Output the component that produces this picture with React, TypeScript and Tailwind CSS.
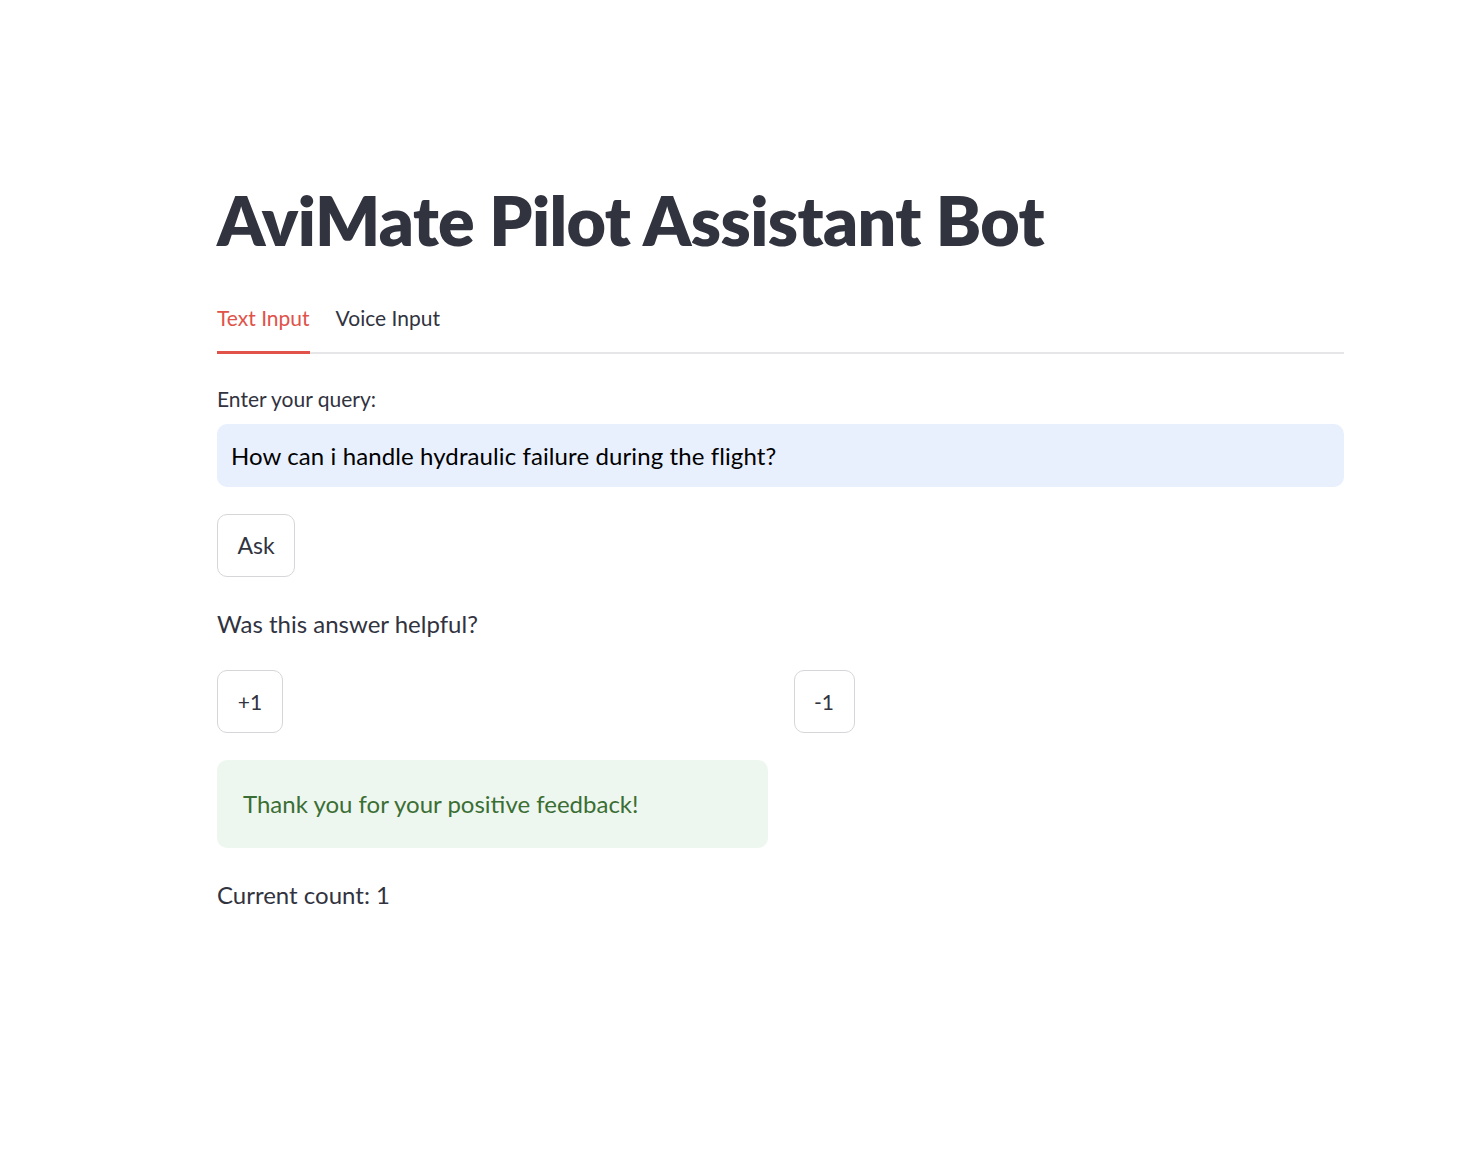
export default function App() {
  return (
    <div className="min-h-[1172px] bg-white text-[#31333f]" style={{ fontFamily: 'Lato, "Noto Sans", sans-serif' }}>
      <div className="ml-[217px] w-[1127px] pt-[176px]">
        <h1 className="text-[68px] font-extrabold leading-[88px] tracking-[-0.6px] text-[#31333f]">AviMate Pilot Assistant Bot</h1>

        <div className="mt-[35px] flex border-b-2 border-[#e6e6e9]">
          <button className="-mb-[2px] border-b-[3px] border-[#e0524a] pb-[17px] pt-[3px] text-[21px] leading-[32px] text-[#e0524a]">Text Input</button>
          <button className="ml-[26px] pb-[18px] pt-[3px] text-[21px] leading-[32px] text-[#31333f]">Voice Input</button>
        </div>

        <div className="mt-[31px] text-[21px] leading-[28px]">Enter your query:</div>
        <div className="mt-[11px] flex h-[63px] items-center rounded-[10px] bg-[#e8f0fe] px-[14px] text-[24px] tracking-[0.1px] text-black">
          How can i handle hydraulic failure during the flight?
        </div>

        <button className="mt-[27px] flex h-[63px] w-[78px] items-center justify-center rounded-[10px] border border-[#d6d6d9] bg-white text-[23px]">Ask</button>

        <p className="mt-[31px] text-[24px] leading-[32px]">Was this answer helpful?</p>

        <div className="mt-[30px] grid grid-cols-2 gap-[26px]">
          <div>
            <button className="flex h-[63px] w-[66px] items-center justify-center rounded-[10px] border border-[#d6d6d9] bg-white text-[21px]">+1</button>
            <div className="mt-[27px] flex h-[88px] items-center rounded-[10px] bg-[#eef7ef] px-[26px] text-[24px] text-[#3b6e34]">
              Thank you for your positive feedback!
            </div>
            <p className="mt-[31px] text-[24px] leading-[32px]">Current count: 1</p>
          </div>
          <div>
            <button className="flex h-[63px] w-[61px] items-center justify-center rounded-[10px] border border-[#d6d6d9] bg-white text-[21px]">-1</button>
          </div>
        </div>
      </div>
    </div>
  );
}
